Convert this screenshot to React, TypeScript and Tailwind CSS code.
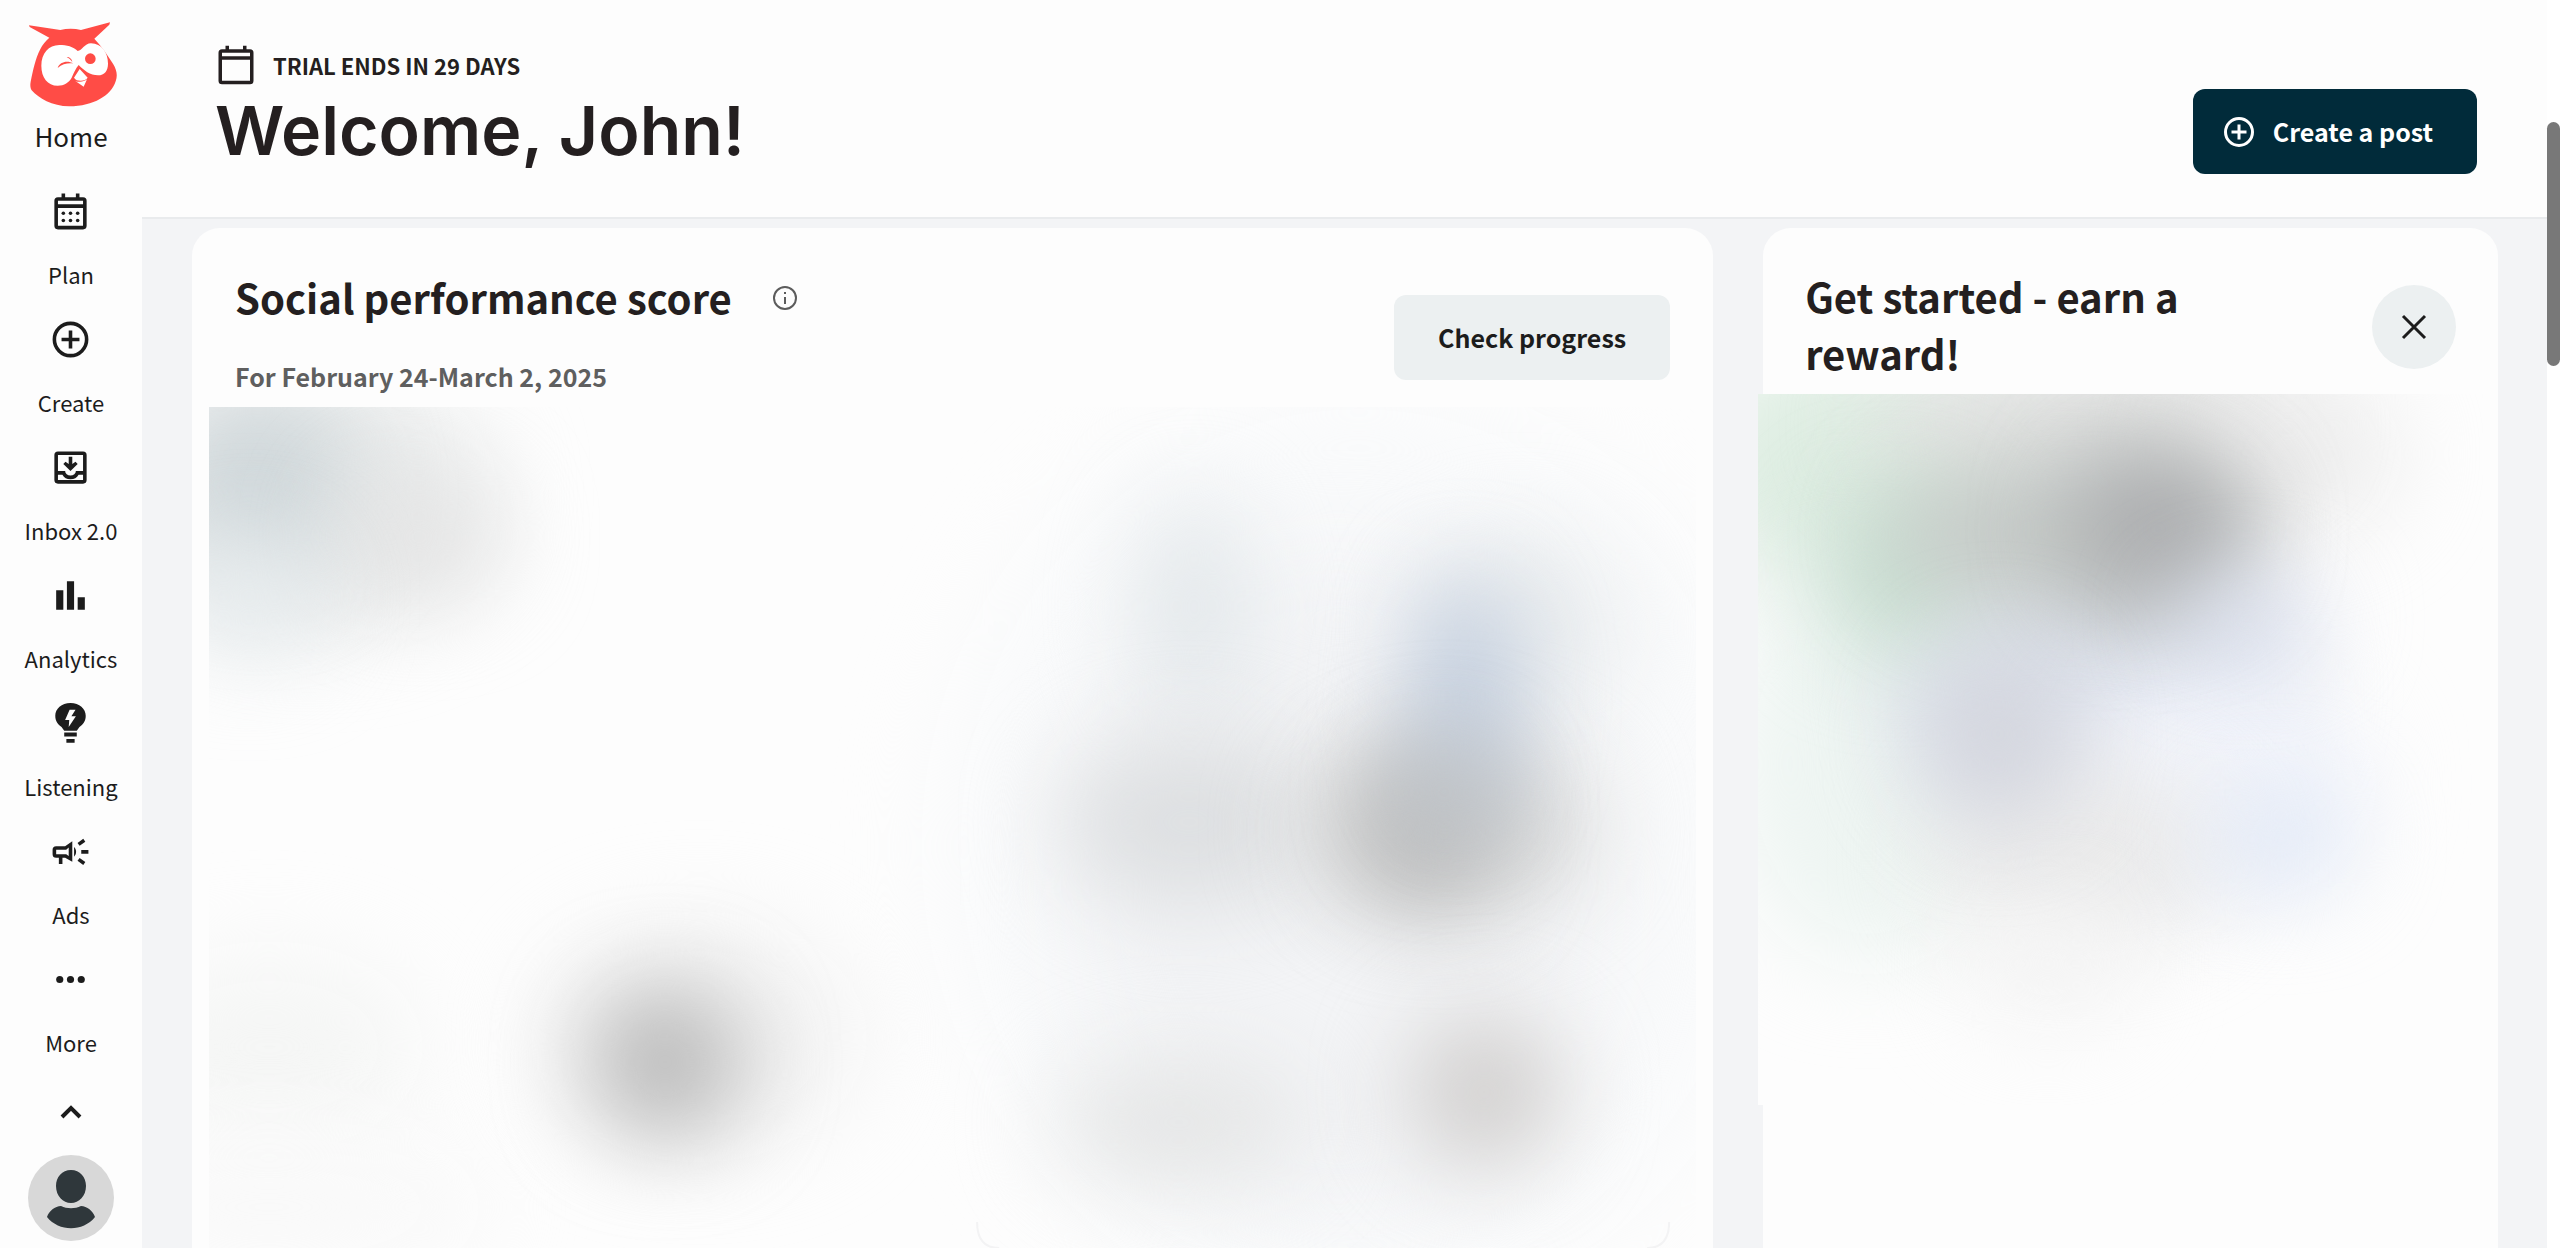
import type { ReactNode } from 'react'

interface NavItem {
  label: string
  icon: ReactNode
}

interface Blob {
  cx: number
  cy: number
  rx: number
  ry: number
  fill: string
}

const NAV_ITEMS: NavItem[] = [
  {
    label: 'Plan',
    icon: (
      <>
        <path fillRule="evenodd" d="M7 2h2v2h6V2h2v2h2a2 2 0 0 1 2 2v14a2 2 0 0 1-2 2H5a2 2 0 0 1-2-2V6a2 2 0 0 1 2-2h2zM5 6v2h14V6zM5 10v10h14V10z" />
        <circle cx="8" cy="13" r="1" />
        <circle cx="12" cy="13" r="1" />
        <circle cx="16" cy="13" r="1" />
        <circle cx="8" cy="17" r="1" />
        <circle cx="12" cy="17" r="1" />
        <circle cx="16" cy="17" r="1" />
      </>
    ),
  },
  {
    label: 'Create',
    icon: (
      <>
        <circle cx="12" cy="12" r="9" fill="none" stroke="currentColor" strokeWidth="2" />
        <path d="M11 7h2v4h4v2h-4v4h-2v-4H7v-2h4z" />
      </>
    ),
  },
  {
    label: 'Inbox 2.0',
    icon: (
      <>
        <path fillRule="evenodd" d="M5 3h14a2 2 0 0 1 2 2v14a2 2 0 0 1-2 2H5a2 2 0 0 1-2-2V5a2 2 0 0 1 2-2zM5 5v9h4a3 2.500 0 0 0 6 0h4V5zM5 16v3h14v-3h-2.500a5 4.500 0 0 1-9 0z" />
        <path d="M11 6h2v4l1.800-1.200L16 10l-4 4-4-4 1.200-1.200L11 10z" />
      </>
    ),
  },
  { label: 'Analytics', icon: <path d="M4 9h4v11H4zM10 4h4v16h-4zM16 13h4v7h-4z" /> },
  {
    label: 'Listening',
    icon: (
      <path
        fillRule="evenodd"
        d="M12 0.500c5 0 8.500 3.200 8.500 7.200 0 3-1.500 4.800-3.500 6.300L15.500 16h-7L7 14C5 12.500 3.500 10.700 3.500 7.700 3.500 3.700 7 0.500 12 0.500zM11.500 4.300L9 10h2.300L11 14l4-6h-2.500l2.300-3.700zM8.500 17h7v2.300h-7zM9.700 20.600h4.600v2.200H9.700z"
      />
    ),
  },
  {
    label: 'Ads',
    icon: (
      <>
        <path fillRule="evenodd" d="M4 9h5l4-2.700v11.400L9 15.500H7.500V19h-2v-3.500H4a2 2 0 0 1-2-2V11a2 2 0 0 1 2-2zM4 11v2.500h5.600l1.400 1V9.800L9.600 11z" />
        <path d="M14 9.500c1.500 1.500 1.500 3.900 0 5.400zM18 11.200h4v2h-4z" />
        <path d="M16.500 8l3.200-2.300M16.500 16.400l3.200 2.300" stroke="currentColor" strokeWidth="2" />
      </>
    ),
  },
  {
    label: 'More',
    icon: (
      <>
        <circle cx="6" cy="12" r="2" />
        <circle cx="12" cy="12" r="2" />
        <circle cx="18" cy="12" r="2" />
      </>
    ),
  },
]

const SCORE_BLOBS: Blob[] = [
  { cx: 100, cy: 90, rx: 180, ry: 130, fill: '#eaecec' },
  { cx: 50, cy: 80, rx: 95, ry: 100, fill: '#cfd7da' },
  { cx: 210, cy: 130, rx: 80, ry: 60, fill: '#e4e4e4' },
  { cx: 40, cy: 190, rx: 70, ry: 60, fill: '#e8edef' },
  { cx: 60, cy: 640, rx: 150, ry: 90, fill: '#f5f6f5' },
  { cx: 60, cy: 800, rx: 220, ry: 70, fill: '#f9f9f9' },
  { cx: 490, cy: 630, rx: 160, ry: 110, fill: '#f2f2f2' },
  { cx: 456, cy: 655, rx: 75, ry: 75, fill: '#b8b8b8' },
  { cx: 1150, cy: 440, rx: 420, ry: 460, fill: '#f9fafb' },
  { cx: 1130, cy: 480, rx: 270, ry: 330, fill: '#f3f4f6' },
  { cx: 985, cy: 200, rx: 55, ry: 110, fill: '#e2e7ea' },
  { cx: 980, cy: 415, rx: 130, ry: 85, fill: '#dddfe1' },
  { cx: 1310, cy: 220, rx: 100, ry: 90, fill: '#e9ecee' },
  { cx: 1240, cy: 420, rx: 150, ry: 90, fill: '#dcdddd' },
  { cx: 1215, cy: 425, rx: 75, ry: 75, fill: '#bcbcbc' },
  { cx: 1255, cy: 290, rx: 50, ry: 120, fill: '#bfcbdc' },
  { cx: 1235, cy: 385, rx: 55, ry: 50, fill: '#bdc0c2' },
  { cx: 970, cy: 715, rx: 125, ry: 60, fill: '#e4e5e5' },
  { cx: 1275, cy: 685, rx: 75, ry: 75, fill: '#d0cecd' },
]

const REWARD_BLOBS: Blob[] = [
  { cx: 90, cy: 70, rx: 170, ry: 130, fill: '#dfeee3' },
  { cx: 110, cy: 370, rx: 140, ry: 200, fill: '#eef5f2' },
  { cx: 330, cy: 30, rx: 220, ry: 80, fill: '#e3e4e3' },
  { cx: 530, cy: 60, rx: 110, ry: 80, fill: '#ededed' },
  { cx: 340, cy: 290, rx: 200, ry: 160, fill: '#e0e5ef' },
  { cx: 460, cy: 390, rx: 150, ry: 110, fill: '#f3f5fb' },
  { cx: 320, cy: 460, rx: 150, ry: 90, fill: '#ebebeb' },
  { cx: 290, cy: 570, rx: 80, ry: 60, fill: '#f4f4f4' },
  { cx: 140, cy: 180, rx: 80, ry: 80, fill: '#c8dfd1' },
  { cx: 310, cy: 140, rx: 180, ry: 80, fill: '#c4c9c6' },
  { cx: 400, cy: 135, rx: 90, ry: 80, fill: '#acadaf' },
  { cx: 490, cy: 225, rx: 80, ry: 35, fill: '#dce1ef' },
  { cx: 240, cy: 340, rx: 75, ry: 90, fill: '#d3d5dd' },
  { cx: 523, cy: 445, rx: 65, ry: 52, fill: '#e0e8f6' },
]

function BlurredPreview({ id, width, height, blobs, children }: {
  id: string
  width: number
  height: number
  blobs: Blob[]
  children?: ReactNode
}) {
  return (
    <svg
      className="block h-full w-full bg-[#fdfdfd]"
      viewBox={`0 0 ${width} ${height}`}
      preserveAspectRatio="none"
      aria-hidden="true"
    >
      <defs>
        <filter id={id} filterUnits="userSpaceOnUse" x="-200" y="-200" width={width + 400} height={height + 400} colorInterpolationFilters="sRGB">
          <feGaussianBlur stdDeviation="46" />
        </filter>
      </defs>
      {blobs.map(b => (
        <ellipse key={`${b.cx}-${b.cy}`} {...b} filter={`url(#${id})`} />
      ))}
      {children}
    </svg>
  )
}

function OwlLogo() {
  return (
    <svg viewBox="86 66 264 253" className="ml-1 h-[85px] w-[88px]" aria-hidden="true">
      <path
        fill="#ff4c46"
        d="M86 75L180 89C200 84 222 84 242 89L329 66L327 73L282 115C304 138 322 165 338 190C350 210 352 225 346 243C332 286 280 318 207 318C155 318 115 293 94 270C90 264 89 255 91 244C98 210 105 176 119 148C127 132 136 121 147 112L88 80Z"
      />
      <path
        fill="#fff"
        d="M232 152C219 139 199 134 177 134C145 134 123 160 123 196C123 232 142 256 172 256C192 256 206 246 214 232C220 219 226 204 235 194C250 210 270 225 293 225C313 225 323 211 323 190C323 157 304 129 272 129C252 129 245 152 232 152Z"
      />
      <path fill="#fff" d="M238 206L221 232C226 239 232 241 241 241C251 241 258 238 262 232ZM224 241C234 247 252 245 260 237L250 259Z" />
      <circle cx="270" cy="175" r="16" fill="#ff4c46" />
      <path fill="#ff4c46" d="M172 203C178 185 200 179 219 189C203 187 186 190 172 203ZM199 170C208 170 215 176 216 185C211 178 206 174 199 170Z" />
    </svg>
  )
}

function Sidebar() {
  return (
    <nav className="flex w-[142px] shrink-0 flex-col items-center bg-[#fdfdfd] pt-[22px]">
      <a href="#home" className="flex flex-col items-center gap-[13px]">
        <OwlLogo />
        <span className="text-[26px] leading-8">Home</span>
      </a>
      <ul className="mt-[38px] flex flex-col gap-7">
        {NAV_ITEMS.map(item => (
          <li key={item.label}>
            <a href={`#${item.label}`} className="flex flex-col items-center gap-[25px] whitespace-nowrap text-[22px] leading-8">
              <svg viewBox="0 0 24 24" className="size-[43px]" fill="currentColor" aria-hidden="true">
                {item.icon}
              </svg>
              {item.label}
            </a>
          </li>
        ))}
      </ul>
      <button type="button" aria-label="Collapse menu" className="mt-[34px]">
        <svg viewBox="0 0 40 40" className="size-10" fill="none" stroke="currentColor" strokeWidth="4" aria-hidden="true">
          <path d="M11 25l9-9 9 9" />
        </svg>
      </button>
      <button type="button" aria-label="Account" className="mt-[23px] shrink-0">
        <svg viewBox="0 0 86 86" className="size-[86px]" aria-hidden="true">
          <circle cx="43" cy="43" r="43" fill="#d8d8d8" />
          <path fill="#2f373b" d="M43 15c9 0 15 7 15 16 0 10-7 17-15 17s-15-7-15-17c0-9 6-16 15-16zM33 51c6 3 14 3 20 0 6 0 12 5 14 11-12 15-36 15-48 0 2-6 8-11 14-11z" />
        </svg>
      </button>
    </nav>
  )
}

function Header() {
  return (
    <header className="flex h-[219px] shrink-0 items-center justify-between border-b-2 border-[#e9ebed] bg-[#fdfdfd] pr-[70px] pl-[73px]">
      <div>
        <p className="flex items-center gap-4 text-[22px] leading-10 font-bold text-[#241f20]">
          <svg viewBox="0 0 24 24" className="size-[42px]" fill="currentColor" aria-hidden="true">
            <path fillRule="evenodd" d="M6 1h2v2h8V1h2v2h2a2 2 0 0 1 2 2v16a2 2 0 0 1-2 2H4a2 2 0 0 1-2-2V5a2 2 0 0 1 2-2h2zM4 5v2h16V5zM4 9v12h16V9z" />
          </svg>
          TRIAL ENDS IN 29 DAYS
        </p>
        <h1 className="font-[Inter,sans-serif] text-[68px] leading-[88px] font-semibold text-[#241f20]">Welcome, John!</h1>
      </div>
      <button type="button" className="mt-[46px] flex h-[85px] items-center gap-4 rounded-xl bg-[#012b3a] pr-11 pl-7 text-[25px] font-bold text-white">
        <svg viewBox="0 0 36 36" className="size-9" fill="none" stroke="currentColor" strokeWidth="3" aria-hidden="true">
          <circle cx="18" cy="18" r="13.500" />
          <path d="M18 10.500v15M10.500 18h15" />
        </svg>
        Create a post
      </button>
    </header>
  )
}

export default function App() {
  return (
    <div className="flex h-screen overflow-hidden bg-[#f3f4f6] font-['Noto_Sans_CJK_SC',sans-serif] text-[#1c1c1c]">
      <Sidebar />
      <div className="flex min-w-0 flex-1 flex-col">
        <Header />
        <main className="grid min-h-0 flex-1 grid-cols-[2.07fr_1fr] gap-[50px] pt-[9px] pr-[49px] pl-[50px]">
          <section className="flex flex-col rounded-t-[28px] bg-[#fdfdfd] px-[17px]">
            <div className="flex h-[179px] items-center justify-between px-[26px]">
              <div className="pt-7">
                <h2 className="flex items-center gap-10 text-[40px] leading-[57px] font-bold text-[#241f20]">
                  Social performance score
                  <svg viewBox="0 0 26 26" className="size-[26px]" fill="none" stroke="#5c5c5c" strokeWidth="2" aria-label="About this score" role="img">
                    <circle cx="13" cy="13" r="11" />
                    <path d="M13 12v7M13 7v2" />
                  </svg>
                </h2>
                <p className="mt-8 text-[25px] leading-9 font-bold text-[#5f5f5f]">For February 24-March 2, 2025</p>
              </div>
              <button type="button" className="mt-10 h-[85px] rounded-xl bg-[#ecf0f1] px-11 text-[25px] font-bold">
                Check progress
              </button>
            </div>
            <div className="min-h-0 flex-1">
              <BlurredPreview id="score-blur" width={1487} height={841} blobs={SCORE_BLOBS}>
                <path d="M768 815q0 26 22 26M1460 815q0 26-22 26" fill="none" stroke="#f3f3f4" strokeWidth="2" />
              </BlurredPreview>
            </div>
          </section>
          <section className="flex flex-col rounded-t-[28px] bg-[#fdfdfd]">
            <div className="flex h-[166px] items-center justify-between px-[42px]">
              <h2 className="max-w-[420px] pt-7 text-[40px] leading-[57px] font-bold text-[#241f20]">Get started - earn a reward!</h2>
              <button type="button" aria-label="Close" className="mt-8 grid size-[84px] shrink-0 place-items-center rounded-full bg-[#ecf0f1]">
                <svg viewBox="0 0 26 26" className="size-[26px]" fill="none" stroke="currentColor" strokeWidth="3" aria-hidden="true">
                  <path d="M2 2l22 22M24 2L2 24" />
                </svg>
              </button>
            </div>
            <div className="mr-[15px] -ml-[5px] h-[711px]">
              <BlurredPreview id="reward-blur" width={725} height={711} blobs={REWARD_BLOBS} />
            </div>
          </section>
        </main>
      </div>
      <div className="w-[13px] shrink-0 bg-white pt-[122px]">
        <div className="h-[244px] rounded-full bg-[#787878]" />
      </div>
    </div>
  )
}
